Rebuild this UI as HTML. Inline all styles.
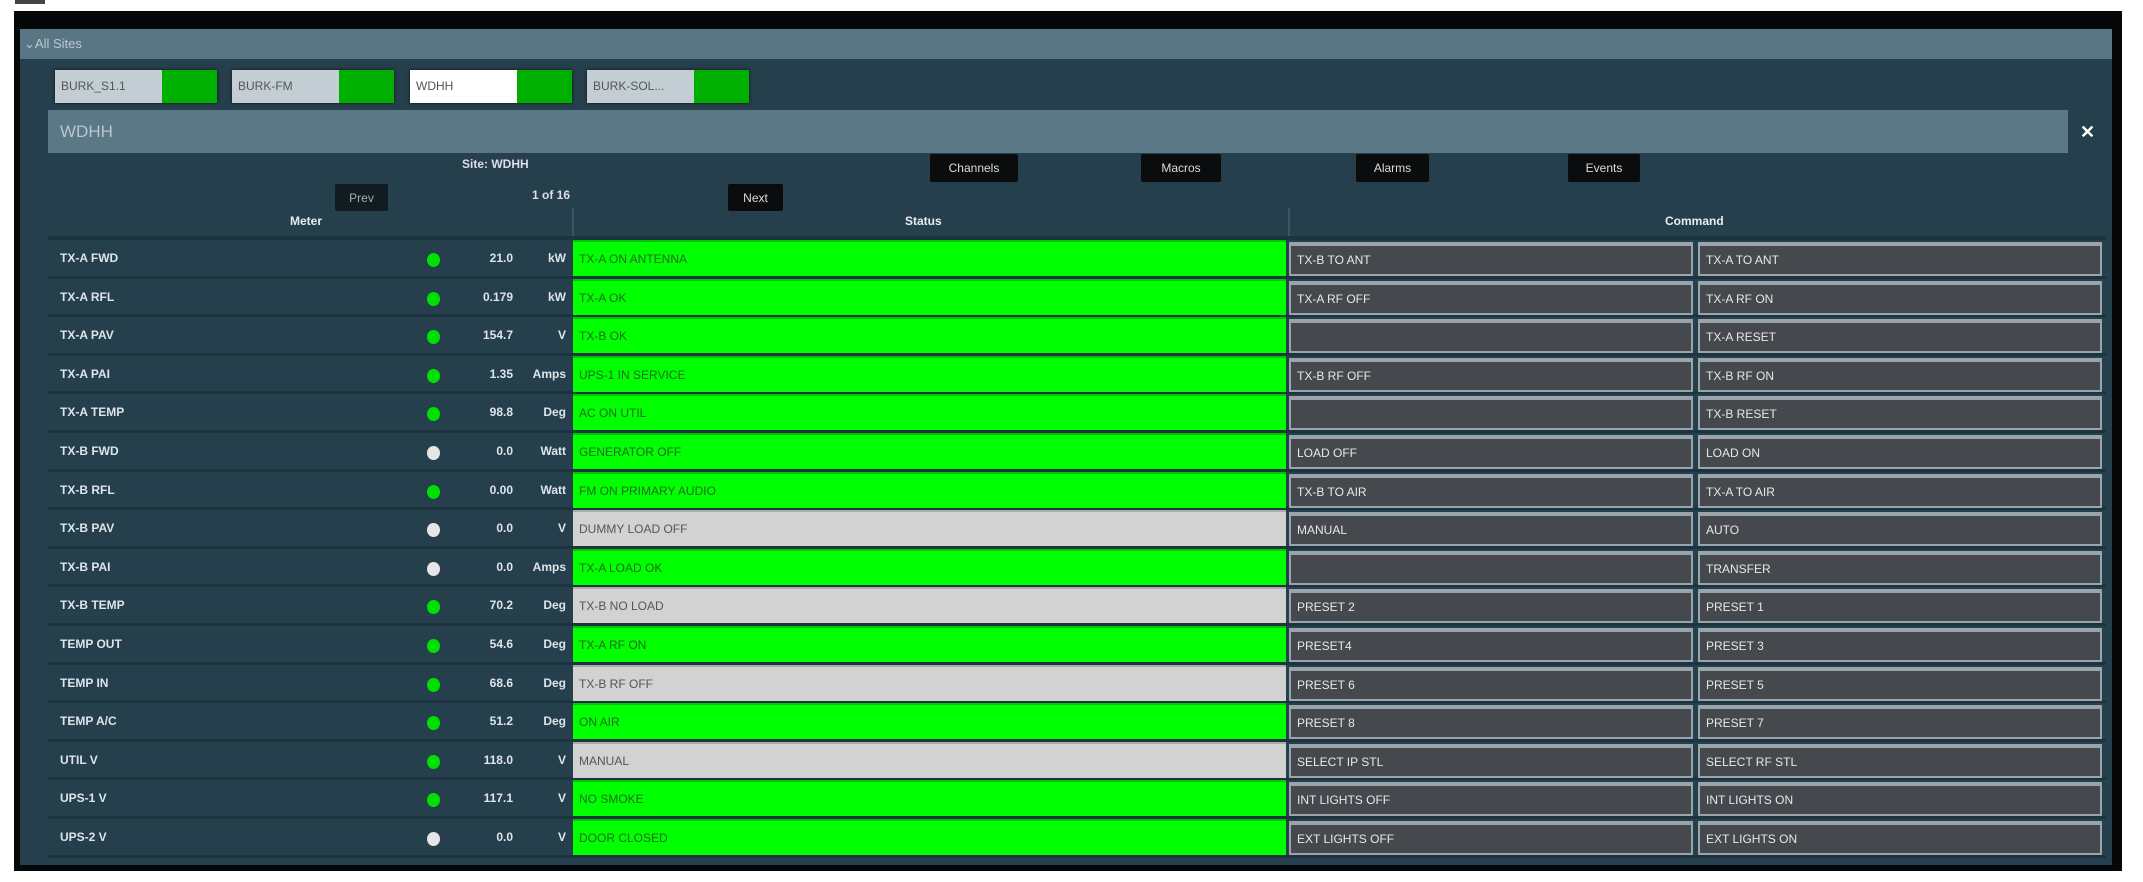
<!DOCTYPE html>
<html><head><meta charset="utf-8"><style>
*{margin:0;padding:0;box-sizing:border-box}
body{width:2143px;height:882px;background:#fff;position:relative;overflow:hidden;font-family:"Liberation Sans",sans-serif;}
.a{position:absolute}
#frame{left:14px;top:11px;width:2108px;height:860px;background:#050708}
#panel{left:20px;top:29px;width:2092px;height:836px;background:#263f4c}
#hdr{left:20px;top:29px;width:2092px;height:30px;background:#587684;color:#b9c9d0;font-size:13px;line-height:30px;padding-left:4px}
.tab{top:70px;height:33px;width:162px;background:#00b000;box-shadow:0 0 3px #111}
.tab span{position:absolute;left:0;top:0;height:33px;width:107px;background:#c3ced4;color:#555;font-size:12px;line-height:33px;padding-left:6px}
#bar{left:48px;top:110px;width:2020px;height:43px;background:#5a7885;color:#b7c8cf;font-size:17px;line-height:43px;padding-left:12px}
.btn{top:154px;height:28px;background:#0a0c0d;color:#ddd;font-size:12px;line-height:28px;text-align:center;border-radius:2px}
.row{position:absolute;left:48px;width:2058px;height:38.6px;border-bottom:3px solid #1d3340}
.nm{position:absolute;left:12px;top:0;line-height:36px;color:#dde5ea;font-size:12px;font-weight:bold}
.dot{position:absolute;left:379px;top:13px;width:13px;height:14px;border-radius:50%;background:#00e000}
.dot.w{background:#e6e6e6}
.val{position:absolute;right:1593px;top:0;line-height:36px;color:#dde5ea;font-size:12px;font-weight:bold}
.un{position:absolute;right:1540px;top:0;line-height:36px;color:#dde5ea;font-size:12px;font-weight:bold}
.st{position:absolute;left:525px;width:713px;top:0;height:36px;background:#00ff00;border-top:2px solid #00c800;color:#1f6a1f;font-size:12px;line-height:34px;padding-left:6px}
.st.g{background:#d2d2d2;border-top:2px solid #aaa;color:#555}
.cm{position:absolute;top:2px;height:34px;background:#45484c;border:2px solid #9aa4ab;border-top:4px solid #9aa4ab;color:#e8e8e8;font-size:12px;line-height:28px;padding-left:6px}
.c1{left:1241px;width:404px}.c2{left:1650px;width:404px}
.th{top:214px;color:#e6eef2;font-size:12px;font-weight:bold}
</style></head><body>
<div class="a" style="left:15px;top:0;width:30px;height:4px;background:#444"></div>
<div class="a" id="frame"></div>
<div class="a" id="panel"></div>
<div class="a" id="hdr">⌄All Sites</div>
<div class="a tab" style="left:55px"><span>BURK_S1.1</span></div>
<div class="a tab" style="left:232px"><span>BURK-FM</span></div>
<div class="a tab" style="left:410px"><span style="background:#fff">WDHH</span></div>
<div class="a tab" style="left:587px"><span>BURK-SOL...</span></div>
<div class="a" id="bar">WDHH</div>
<div class="a" style="left:2080px;top:122px;color:#fff;font-size:18px;font-weight:bold">✕</div>
<div class="a" style="left:462px;top:157px;color:#dde;font-size:12px;font-weight:bold">Site: WDHH</div>
<div class="a btn" style="left:335px;top:184px;width:53px;height:27px;color:#aaa;background:#111c22">Prev</div>
<div class="a" style="left:532px;top:188px;color:#dde;font-size:12px;font-weight:bold">1 of 16</div>
<div class="a btn" style="left:728px;top:184px;width:55px;height:27px">Next</div>
<div class="a btn" style="left:930px;width:88px">Channels</div>
<div class="a btn" style="left:1141px;width:80px">Macros</div>
<div class="a btn" style="left:1356px;width:73px">Alarms</div>
<div class="a btn" style="left:1568px;width:72px">Events</div>
<div class="a" style="left:572px;top:208px;width:2px;height:32px;background:#3b5562"></div>
<div class="a" style="left:1288px;top:208px;width:2px;height:32px;background:#3b5562"></div>
<div class="a th" style="left:290px">Meter</div>
<div class="a th" style="left:905px">Status</div>
<div class="a th" style="left:1665px">Command</div>
<div class="a" style="left:48px;top:236px;width:2058px;height:4px;background:#1d3340"></div>

<div class="row" style="top:240px"><div class="nm">TX-A FWD</div><div class="dot"></div><div class="val">21.0</div><div class="un">kW</div><div class="st">TX-A ON ANTENNA</div><div class="cm c1">TX-B TO ANT</div><div class="cm c2">TX-A TO ANT</div></div>
<div class="row" style="top:278.6px"><div class="nm">TX-A RFL</div><div class="dot"></div><div class="val">0.179</div><div class="un">kW</div><div class="st">TX-A OK</div><div class="cm c1">TX-A RF OFF</div><div class="cm c2">TX-A RF ON</div></div>
<div class="row" style="top:317.2px"><div class="nm">TX-A PAV</div><div class="dot"></div><div class="val">154.7</div><div class="un">V</div><div class="st">TX-B OK</div><div class="cm c1"></div><div class="cm c2">TX-A RESET</div></div>
<div class="row" style="top:355.8px"><div class="nm">TX-A PAI</div><div class="dot"></div><div class="val">1.35</div><div class="un">Amps</div><div class="st">UPS-1 IN SERVICE</div><div class="cm c1">TX-B RF OFF</div><div class="cm c2">TX-B RF ON</div></div>
<div class="row" style="top:394.4px"><div class="nm">TX-A TEMP</div><div class="dot"></div><div class="val">98.8</div><div class="un">Deg</div><div class="st">AC ON UTIL</div><div class="cm c1"></div><div class="cm c2">TX-B RESET</div></div>
<div class="row" style="top:433px"><div class="nm">TX-B FWD</div><div class="dot w"></div><div class="val">0.0</div><div class="un">Watt</div><div class="st">GENERATOR OFF</div><div class="cm c1">LOAD OFF</div><div class="cm c2">LOAD ON</div></div>
<div class="row" style="top:471.6px"><div class="nm">TX-B RFL</div><div class="dot"></div><div class="val">0.00</div><div class="un">Watt</div><div class="st">FM ON PRIMARY AUDIO</div><div class="cm c1">TX-B TO AIR</div><div class="cm c2">TX-A TO AIR</div></div>
<div class="row" style="top:510.2px"><div class="nm">TX-B PAV</div><div class="dot w"></div><div class="val">0.0</div><div class="un">V</div><div class="st g">DUMMY LOAD OFF</div><div class="cm c1">MANUAL</div><div class="cm c2">AUTO</div></div>
<div class="row" style="top:548.8px"><div class="nm">TX-B PAI</div><div class="dot w"></div><div class="val">0.0</div><div class="un">Amps</div><div class="st">TX-A LOAD OK</div><div class="cm c1"></div><div class="cm c2">TRANSFER</div></div>
<div class="row" style="top:587.4px"><div class="nm">TX-B TEMP</div><div class="dot"></div><div class="val">70.2</div><div class="un">Deg</div><div class="st g">TX-B NO LOAD</div><div class="cm c1">PRESET 2</div><div class="cm c2">PRESET 1</div></div>
<div class="row" style="top:626px"><div class="nm">TEMP OUT</div><div class="dot"></div><div class="val">54.6</div><div class="un">Deg</div><div class="st">TX-A RF ON</div><div class="cm c1">PRESET4</div><div class="cm c2">PRESET 3</div></div>
<div class="row" style="top:664.6px"><div class="nm">TEMP IN</div><div class="dot"></div><div class="val">68.6</div><div class="un">Deg</div><div class="st g">TX-B RF OFF</div><div class="cm c1">PRESET 6</div><div class="cm c2">PRESET 5</div></div>
<div class="row" style="top:703.2px"><div class="nm">TEMP A/C</div><div class="dot"></div><div class="val">51.2</div><div class="un">Deg</div><div class="st">ON AIR</div><div class="cm c1">PRESET 8</div><div class="cm c2">PRESET 7</div></div>
<div class="row" style="top:741.8px"><div class="nm">UTIL V</div><div class="dot"></div><div class="val">118.0</div><div class="un">V</div><div class="st g">MANUAL</div><div class="cm c1">SELECT IP STL</div><div class="cm c2">SELECT RF STL</div></div>
<div class="row" style="top:780.4px"><div class="nm">UPS-1 V</div><div class="dot"></div><div class="val">117.1</div><div class="un">V</div><div class="st">NO SMOKE</div><div class="cm c1">INT LIGHTS OFF</div><div class="cm c2">INT LIGHTS ON</div></div>
<div class="row" style="top:819px"><div class="nm">UPS-2 V</div><div class="dot w"></div><div class="val">0.0</div><div class="un">V</div><div class="st">DOOR CLOSED</div><div class="cm c1">EXT LIGHTS OFF</div><div class="cm c2">EXT LIGHTS ON</div></div>
</body></html>
